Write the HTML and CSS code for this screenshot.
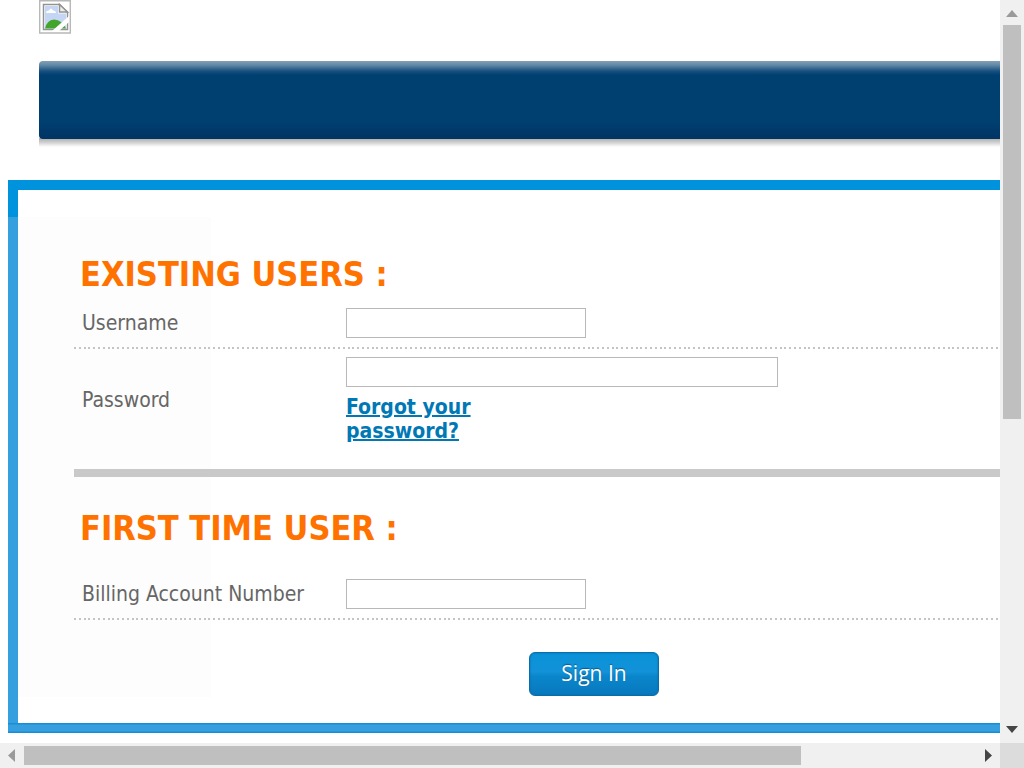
FILE: index.html
```
<!DOCTYPE html>
<html lang="en">
<head>
<meta charset="utf-8">
<title>Sign In</title>
<link rel="stylesheet" href="styles.css">
</head>
<body>
<div class="frame">
  <div class="page">
    <header class="header">
      <svg class="logo" viewBox="0 0 32 34" role="img" aria-label="Logo">
        <path d="M.7 .7H31.300V33H.7Z" fill="#fff" stroke="#b8b8b8" stroke-width="1.400"/>
        <path d="M4.500 4.500H20.500L28.500 12.500V29.500H4.500Z" fill="#fff" stroke="#929292" stroke-width="1.500"/>
        <path d="M6 6H19V13.500H27V28.500H6Z" fill="#c5d6f5"/>
        <path d="M7 13Q7 10.500 10 10.500Q12 6.500 14 10.500Q17 10.500 17 13Z" fill="#fff"/>
        <path d="M6 28.500Q8 20 15 19.500Q23 20 27 28.500Z" fill="#43a52c"/>
        <path d="M20.500 4.500V12H28.500Z" fill="#eee" stroke="#929292" stroke-width="1.500"/>
        <path d="M13 31L30 16V22L20 31Z" fill="#fff"/>
      </svg>
      <div class="banner"></div>
    </header>
    <form class="panel">
      <h2 class="heading">EXISTING USERS :</h2>
      <div class="row dotted">
        <label for="user">Username</label>
        <input class="field" id="user" type="text">
      </div>
      <div class="row ruled">
        <label for="pass">Password</label>
        <div class="stack">
          <input class="field wide" id="pass" type="password">
          <a class="forgot" href="#">Forgot your<br>password?</a>
        </div>
      </div>
      <h2 class="heading second">FIRST TIME USER :</h2>
      <div class="row dotted">
        <label for="account">Billing Account Number</label>
        <input class="field" id="account" type="text">
      </div>
      <button class="signin" type="button">Sign In</button>
    </form>
  </div>
  <div class="vbar">
    <svg class="arrow" viewBox="0 0 24 25"><path d="M6 17L12 10L18 17Z" fill="#9a9a9a"/></svg>
    <div class="vthumb"></div>
    <svg class="arrow end" viewBox="0 0 24 25"><path d="M6 8H18L12 15Z" fill="#454545"/></svg>
  </div>
  <div class="hbar">
    <svg class="arrow" viewBox="0 0 24 25"><path d="M15 6V19L8 12.500Z" fill="#9a9a9a"/></svg>
    <div class="hthumb"></div>
    <svg class="arrow end" viewBox="0 0 24 25"><path d="M9 6V19L16 12.500Z" fill="#454545"/></svg>
  </div>
  <div class="corner"></div>
</div>
</body>
</html>
```
FILE: styles.css
```
* { box-sizing: border-box; }
body {
  margin: 0;
  background: #fff;
  color: #666;
  font: 21px/24px "DejaVu Sans Condensed", "DejaVu Sans", sans-serif;
}
.frame {
  display: grid;
  grid-template-columns: minmax(0, 1fr) 24px;
  grid-template-rows: minmax(0, 1fr) 25px;
  height: 100vh;
}
.page { overflow: hidden; padding-left: 8px; }
.header { padding-left: 31px; margin-bottom: 33px; }
.logo { display: block; width: 32px; height: 34px; margin-bottom: 27px; }
.banner {
  height: 86px;
  background: linear-gradient(#aaa, #ccc 4px, #fff) bottom / 100% 9px no-repeat;
}
.banner::before {
  content: "";
  display: block;
  height: 78px;
  border-radius: 4px 0 0 4px;
  background: linear-gradient(#829fb6, #628aa8 4px, #195080 10px, #004071 14px, #004071 60px, #003463 78px);
}
.panel {
  padding: 74px 0 37px 66px;
  background:
    linear-gradient(#0093dd, #0093dd) top / 100% 10px no-repeat,
    linear-gradient(#168fd8 0 1px, #36a0df 2px 8px, #168fd8 9px) bottom / 100% 10px no-repeat,
    linear-gradient(#0093dd 37px, #36a0df 37px) left / 10px 100% no-repeat,
    linear-gradient(transparent 37px, #fdfdfd 37px calc(100% - 36px), transparent calc(100% - 36px)) 10px 0 / 193px 100% no-repeat;
}
.heading {
  margin: 0 0 14px 6px;
  color: #ff7200;
  font: bold 34px/40px "DejaVu Sans Condensed", "DejaVu Sans", sans-serif;
}
.heading.second { margin-top: 31px; margin-bottom: 31px; }
.row {
  display: grid;
  grid-template-columns: 264px minmax(0, 1fr);
  align-items: center;
  padding-left: 8px;
}
.dotted {
  padding-bottom: 11px;
  background: linear-gradient(90deg, #c4c4c4 0 2px, transparent 2px 5px, #c4c4c4 5px 7px, transparent 7px 10px, #c4c4c4 10px 12px, transparent 12px 14px, #c4c4c4 14px 16px, transparent 16px 19px, #c4c4c4 19px 21px, transparent 21px) left bottom / 24px 2px repeat-x;
}
.ruled { padding: 8px 0 26px 8px; border-bottom: 8px solid #c9c9c9; }
.field {
  display: block;
  width: 240px;
  height: 30px;
  padding: 2px 4px;
  border: 1px solid #b8b8b8;
  background: #fff;
  font: inherit;
}
.wide { width: 432px; }
.stack { display: grid; gap: 8px; justify-items: start; }
.forgot {
  color: #0078b5;
  font: bold 21px/24px "DejaVu Sans Condensed", "DejaVu Sans", sans-serif;
  text-decoration-thickness: 2px;
}
.signin {
  display: block;
  width: 130px;
  height: 44px;
  margin: 32px 0 0 455px;
  padding: 0 0 3px;
  border: 1px solid #086da8;
  border-radius: 6px;
  background: linear-gradient(#0a92d8, #1292d8 45%, #0a86cc 55%, #0879bd);
  box-shadow: inset 0 0 2px #086da8;
  color: #fff;
  font: 21px/36px "Open Sans", sans-serif;
  text-shadow: 0 -1px 1px #075b8c;
}
.vbar, .hbar { display: flex; background: #f0f0f0; }
.vbar { flex-direction: column; }
.arrow { flex: none; display: block; width: 24px; height: 25px; }
.end { margin-left: auto; }
.vbar .end { margin: auto 0 0; }
.vthumb { flex: 0 0 53%; margin: 0 3px; background: #bfbfbf; }
.hthumb { flex: 0 0 77.7%; margin: 3px 0; background: #bfbfbf; }
.corner { background: #dcdcdc; }
```
